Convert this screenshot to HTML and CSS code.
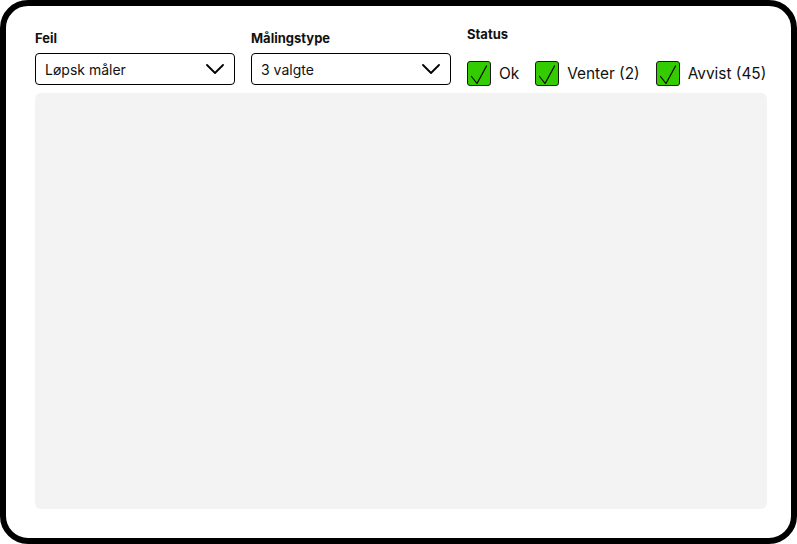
FILE: index.html
```html
<!DOCTYPE html>
<html lang="no">
<head>
<meta charset="utf-8">
<title>Filter</title>
<link rel="stylesheet" href="styles.css">
</head>
<body>
<div class="frame">
  <div class="filters">
    <div class="field">
      <div class="label">Feil</div>
      <div class="select">
        <span>Løpsk måler</span>
        <svg class="chev" width="18" height="10" viewBox="0 0 18 10"><path d="M1 1 L9 9 L17 1" fill="none" stroke="#000" stroke-width="1.8" stroke-linecap="round" stroke-linejoin="round"/></svg>
      </div>
    </div>
    <div class="field">
      <div class="label">Målingstype</div>
      <div class="select">
        <span>3 valgte</span>
        <svg class="chev" width="18" height="10" viewBox="0 0 18 10"><path d="M1 1 L9 9 L17 1" fill="none" stroke="#000" stroke-width="1.8" stroke-linecap="round" stroke-linejoin="round"/></svg>
      </div>
    </div>
    <div class="status">
      <div class="label status-label">Status</div>
      <div class="checks">
        <label class="check"><span class="box"><svg width="24" height="24" viewBox="0 0 24 24"><path d="M4.5 14.5 L10 21.5 L19.5 4" fill="none" stroke="#000" stroke-width="1.2" stroke-linecap="round" stroke-linejoin="round"/></svg></span>Ok</label>
        <label class="check"><span class="box"><svg width="24" height="24" viewBox="0 0 24 24"><path d="M4.5 14.5 L10 21.5 L19.5 4" fill="none" stroke="#000" stroke-width="1.2" stroke-linecap="round" stroke-linejoin="round"/></svg></span>Venter (2)</label>
        <label class="check"><span class="box"><svg width="24" height="24" viewBox="0 0 24 24"><path d="M4.5 14.5 L10 21.5 L19.5 4" fill="none" stroke="#000" stroke-width="1.2" stroke-linecap="round" stroke-linejoin="round"/></svg></span>Avvist (45)</label>
      </div>
    </div>
  </div>
  <div class="panel"></div>
</div>
</body>
</html>
```
FILE: styles.css
```css
* { box-sizing: border-box; }
html, body { margin: 0; padding: 0; background: #fff; }
body {
  font-family: Inter, "Noto Sans", "Liberation Sans", sans-serif;
  color: #111;
}
.frame {
  width: 797px;
  height: 544px;
  border: 6px solid #000;
  border-radius: 28px;
  padding: 20px 24px 29px 29px;
  display: flex;
  flex-direction: column;
  background: #fff;
}
.filters {
  display: flex;
  align-items: flex-start;
  gap: 16px;
}
.field { width: 200px; flex: none; display: flex; flex-direction: column; padding-top: 4px; }
.label {
  font-size: 13px;
  font-weight: 700;
  line-height: 16px;
  margin-bottom: 7px;
  white-space: nowrap;
}
.status { flex: none; }
.status-label { margin-bottom: 19px; }
.select {
  height: 32px;
  border: 1px solid #000;
  border-radius: 4px;
  display: flex;
  align-items: center;
  justify-content: space-between;
  padding: 0 10px 0 9px;
  font-size: 14px;
  white-space: nowrap;
}
.chev { display: block; }
.checks { display: flex; gap: 16px; align-items: center; }
.check {
  display: flex;
  align-items: center;
  gap: 8px;
  font-size: 15.4px;
  line-height: 24px;
  white-space: nowrap;
  flex: none;
}
.box {
  width: 24px;
  height: 25px;
  background: #33cc00;
  border: 1px solid #1a1a1a;
  border-radius: 3px;
  display: flex;
  align-items: center;
  justify-content: center;
  overflow: hidden;
  flex: none;
}
.box svg { display: block; flex: none; }
.panel {
  margin-top: 7px;
  flex: 1;
  background: #f3f3f3;
  border-radius: 6px;
}
```
